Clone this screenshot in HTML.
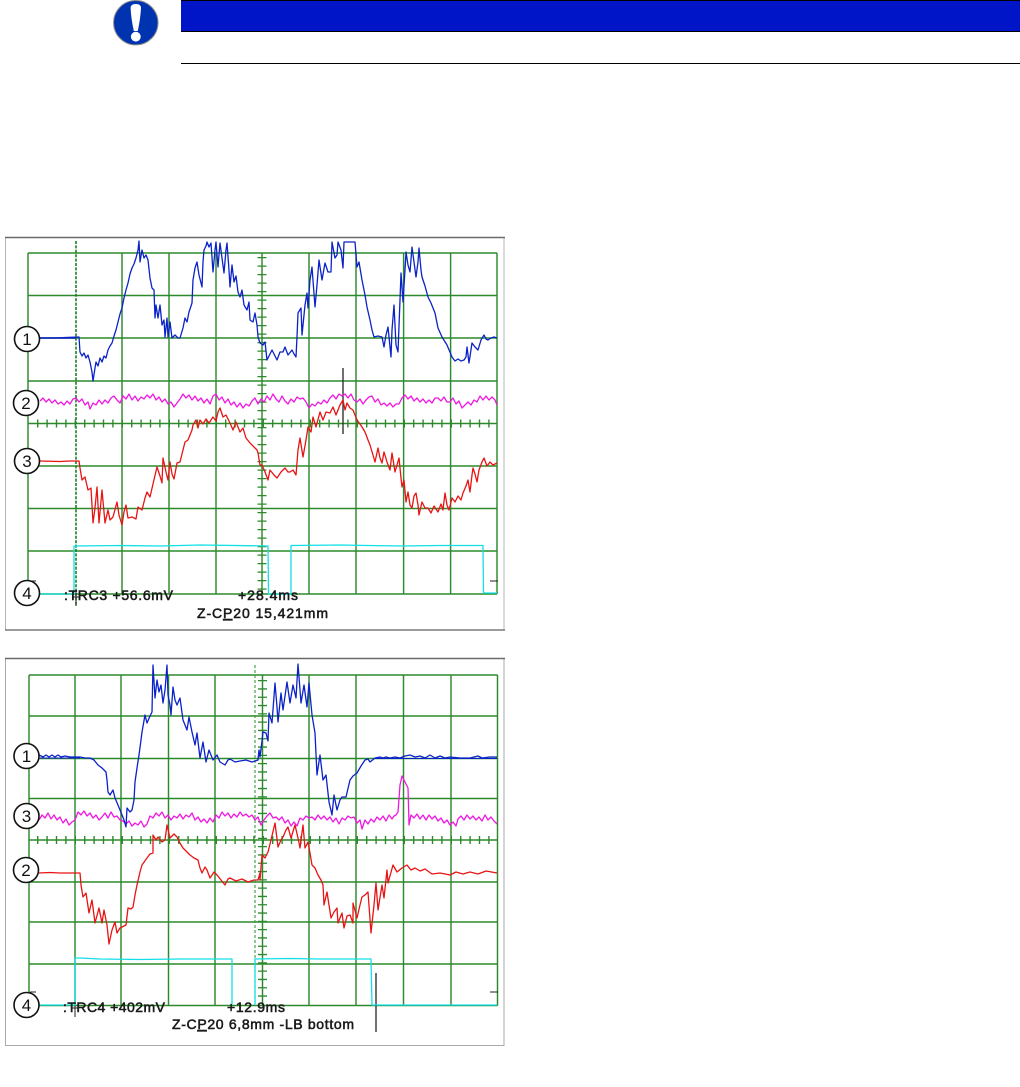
<!DOCTYPE html>
<html><head><meta charset="utf-8"><title>Oscilloscope traces</title>
<style>
html,body{margin:0;padding:0;background:#fff}
svg{display:block}
text{font-family:"Liberation Sans",sans-serif}
.sc{filter:blur(.35px)}
.t{font-size:14px;fill:#1a1a1a;stroke:#1a1a1a;stroke-width:.55}
.n{font-size:17px;fill:#111;text-anchor:middle}
.c{fill:#fff;stroke:#111;stroke-width:1.6}
.g{stroke:#2c8a2c;stroke-width:1.45;fill:none}
.tr{fill:none;stroke-width:1.3;stroke-linejoin:round}
</style></head>
<body>
<svg width="1020" height="1087" viewBox="0 0 1020 1087" xmlns="http://www.w3.org/2000/svg">
<rect width="1020" height="1087" fill="#fff"/>
<!-- header -->
<rect x="181" y="0" width="839" height="32" fill="#000"/>
<rect x="181" y="1" width="839" height="30" fill="#0015c8"/>
<rect x="181" y="63" width="839" height="1" fill="#000"/>
<circle cx="135.8" cy="22.7" r="22.2" fill="#0033b0" stroke="#8a8a8a" stroke-width="1"/>
<path d="M130.6 8Q130.6 4 135.8 4Q141 4 141 8Q140.5 18 137.8 31H133.8Q131 18 130.6 8Z" fill="#fff"/>
<circle cx="135.8" cy="36.7" r="4.9" fill="#fff"/>

<g class="sc">
<!-- plot 1 -->
<rect x="5.5" y="237.5" width="498.5" height="392.5" fill="#fff" stroke="#b5b5b5"/>
<path d="M5 237.5H505" stroke="#6a6a6a" stroke-width="1.6"/>
<path d="M5 630H505" stroke="#7a7a7a" stroke-width="1.4"/>
<path class="g" d="M28 253V594M122 253V594M169 253V594M216 253V594M262 253V594M309 253V594M356 253V594M403.6 253V594M450.6 253V594M497 253V594M28 253H497M28 295.5H497M28 338H497M28 381H497M28 423.5H497M28 466H497M28 508.5H497M28 551H497M28 594H497"/>
<path d="M76 241V605" stroke="#17801f" stroke-width="1.6" stroke-dasharray="3 1.4" fill="none"/>
<path d="M37 423.5H497" stroke="#2c8a2c" stroke-width="8" stroke-dasharray="1.4 8" fill="none"/>
<path d="M262 257V590" stroke="#2c8a2c" stroke-width="9" stroke-dasharray="1.3 7.2" fill="none"/>
<path d="M490 581H498M30 581H36" stroke="#222" stroke-width="1"/>
<path d="M343 368V434" stroke="#333" stroke-width="1.4"/>
<path d="M76 590V606M72 597H80" stroke="#222" stroke-width="1"/>
<polyline class="tr" stroke="#10e0e6" stroke-width="1.6" points="40,594 74,594 74,546 120,545.5 160,546 200,545 268,546 268.5,594 291,594 291,545.5 340,545 400,546 440,545.5 483,545.5 483.5,593 497,593"/>
<polyline class="tr" stroke="#ee18e0" points="40,401 43,398 46,402 49,399 52,403 55,400 58,404 61,402 64,405 67,401 70,404 73,399 76,398 79,402 82,399 85,405 88,402 90,409 93,403 96,405 99,400 102,404 105,400 108,403 111,398 114,396 117,400 120,403 123,396 126,399 129,394 132,400 135,396 138,401 141,397 144,399 147,395 150,398 153,394 156,400 159,397 162,402 165,399 168,404 171,402 174,407 177,403 180,399 183,394 186,398 189,395 192,400 195,396 198,401 201,398 204,403 207,399 210,404 213,396 216,394 219,400 222,397 225,403 228,399 231,405 234,402 237,407 240,403 243,408 246,404 249,406 252,401 255,398 258,404 261,399 264,402 267,396 270,400 273,394 276,399 279,402 282,396 285,401 288,404 291,399 294,402 297,397 300,399 303,398 306,402 309,408 312,404 315,406 318,402 321,404 324,400 327,403 330,398 333,395 336,399 339,394 342,396 345,394 348,398 351,394 354,400 357,402 360,399 363,404 366,400 369,397 372,396 375,402 378,399 381,405 384,403 387,406 390,403 393,407 396,404 399,404 402,398 405,395 408,399 411,396 414,401 417,398 420,402 423,399 426,403 429,400 432,403 435,398 438,398 441,401 444,397 447,402 450,402 453,398 456,404 459,401 462,408 465,405 468,402 471,405 474,400 477,402 480,396 483,400 486,396 489,400 492,397 495,400 497,405"/>
<polyline class="tr" stroke="#e81414" points="40,461 60,461.5 70,461 79,461 80,468 82,480 85,477 88,490 91,488 93,523 95,508 97,487 99,523 102,490 105,523 108,510 110,520 113,517 117,502 119,515 122,525 124,512 126,505 128,518 132,517 136,519 138,507 142,510 145,498 147,492 150,497 153,484 157,467 160,476 162,483 163,458 166,472 168,480 170,462 172,474 174,479 177,463 180,462 183,450 185,442 188,440 190,435 192,430 193,425 196,420 198,428 200,420 203,424 206,419 209,423 213,417 216,421 218,412 220,408 223,417 226,415 230,423 233,430 236,422 240,432 243,428 246,438 250,443 253,446 257,450 258,453 260,465 262,465 265,472 268,480 270,470 274,475 277,478 281,472 285,468 288,472 290,472 293,470 296,475 298,450 300,438 303,457 306,440 308,427 311,432 313,417 316,427 320,412 323,420 326,412 330,413 333,407 336,415 340,405 343,400 345,410 347,403 350,408 353,410 357,420 360,424 362,427 365,432 368,440 370,445 373,455 375,462 378,448 380,458 382,463 384,452 387,462 390,470 392,453 395,472 399,458 401,478 402,487 404,480 406,502 408,492 410,505 412,508 414,496 416,493 418,505 419,515 422,502 425,508 428,508 431,513 434,506 438,512 441,504 443,510 445,493 447,505 449,510 452,498 455,502 458,496 461,500 463,493 466,486 468,480 470,492 472,475 473,468 475,474 477,482 479,470 482,462 484,458 487,466 490,462 493,465 497,463"/>
<polyline class="tr" stroke="#0b22c8" points="40,338 55,338 65,337.5 79,337 80,352 82,356 84,353 86,358 88,355 90,362 92,372 93,381 95,368 96,362 98,366 100,358 102,362 104,356 106,358 108,350 110,346 112,343 114,336 116,330 118,322 120,314 122,308 124,298 126,290 128,283 130,274 132,268 134,264 136,258 138,250 139,241 140,262 142,250 144,258 146,255 148,260 150,278 152,288 154,290 155,318 156,305 158,318 160,305 162,325 164,320 165,337 167,318 168,337 170,322 172,338 175,335 178,338 180,338 183,328 185,318 187,322 189,312 192,303 193,280 195,268 197,262 199,275 202,287 203,262 204,250 206,246 207,242 209,247 211,243 213,272 215,250 216,242 218,267 220,243 222,258 224,273 226,250 227,243 229,270 230,287 232,265 234,282 236,276 238,292 240,297 242,290 244,305 247,310 249,302 250,320 253,322 255,313 257,325 258,337 260,343 263,345 265,342 267,360 270,354 272,350 275,356 277,360 280,352 283,352 285,347 288,355 292,350 294,354 296,357 297,337 298,313 301,308 302,335 305,305 307,293 308,308 310,280 312,267 315,307 317,285 319,260 322,280 325,263 328,272 331,272 332,242 335,258 337,255 338,242 341,250 343,268 344,242 350,242 355,242 357,267 359,262 362,280 365,295 367,307 370,320 372,330 374,337 378,336 382,337 384,347 386,335 388,327 391,357 392,330 394,305 396,345 398,352 400,300 401,273 403,302 405,270 406,252 408,265 410,272 412,247 414,262 416,277 418,262 419,248 421,270 422,277 425,286 428,297 431,303 435,313 438,328 442,337 447,345 452,357 455,361 458,359 461,361 464,360 466,357 467,347 469,363 472,343 475,347 478,350 481,340 484,335 486,339 488,340 491,338 494,337 497,338"/>
<path d="M40 338H76" stroke="#0b22c8" stroke-width="1.4"/>
<text class="t" x="64" y="600" textLength="109" lengthAdjust="spacing">:TRC3 +56.6mV</text>
<text class="t" x="238" y="600" textLength="60" lengthAdjust="spacing">+28.4ms</text>
<text class="t" x="197" y="618" textLength="131" lengthAdjust="spacing">Z-C<tspan text-decoration="underline">P</tspan>20 15,421mm</text>
<circle class="c" cx="27" cy="339" r="12.5"/><text class="n" x="27" y="345">1</text>
<circle class="c" cx="26" cy="403" r="12.5"/><text class="n" x="26" y="409">2</text>
<circle class="c" cx="27" cy="461" r="12.5"/><text class="n" x="27" y="467">3</text>
<circle class="c" cx="27" cy="593" r="12.5"/><text class="n" x="27" y="599">4</text>

<!-- plot 2 -->
<rect x="5.5" y="658.5" width="498.5" height="387" fill="#fff" stroke="#aaa"/>
<path d="M5 658.5H505" stroke="#6a6a6a" stroke-width="1.4"/>
<path class="g" d="M29 675V1005.5M75 675V1005.5M121 675V1005.5M168.5 675V1005.5M215 675V1005.5M262.5 675V1005.5M309 675V1005.5M356 675V1005.5M403.5 675V1005.5M451 675V1005.5M497.5 675V1005.5M29 675H497.5M29 716H497.5M29 758.5H497.5M29 798.5H497.5M29 840H497.5M29 882H497.5M29 922H497.5M29 964H497.5M29 1005.5H497.5"/>
<path d="M255 665V1005" stroke="#3a9a3a" stroke-width="1.1" stroke-dasharray="3 2" fill="none"/>
<path d="M37 840H497" stroke="#2c8a2c" stroke-width="8" stroke-dasharray="1.4 8" fill="none"/>
<path d="M262.5 680V1000" stroke="#2c8a2c" stroke-width="9" stroke-dasharray="1.3 7" fill="none"/>
<path d="M490 992H498M30 992H36" stroke="#222" stroke-width="1"/>
<path d="M376 973V1032" stroke="#111" stroke-width="1.2"/>
<path d="M75 1000V1017M71 1008H79" stroke="#222" stroke-width="1"/>
<polyline class="tr" stroke="#10e0e6" stroke-width="1.6" points="39,1005 75,1005 75,958 80,958 100,959 140,959.5 180,959 232,959 232,1005"/>
<polyline class="tr" stroke="#10e0e6" stroke-width="1.6" points="255,1005 255,959 290,958.5 320,959 371,959 372,1005 497,1005"/>
<polyline class="tr" stroke="#ee18e0" points="39,820 42,815 45,818 48,813 51,819 54,815 57,820 60,817 63,823 66,819 69,825 72,822 75,820 78,812 81,815 84,811 87,816 90,813 93,818 96,815 99,820 102,817 105,813 108,818 111,812 114,817 117,816 120,820 123,821 126,824 129,821 132,826 135,823 138,825 141,821 144,827 147,824 150,816 153,818 156,813 159,816 162,812 165,818 168,815 171,820 174,816 177,818 180,814 183,819 186,815 189,817 192,813 195,820 198,817 201,822 204,819 207,823 210,818 213,822 216,815 219,818 222,812 225,816 228,813 231,818 234,814 237,817 240,812 243,816 246,814 249,817 252,815 255,820 258,817 261,825 264,820 267,816 270,813 273,818 276,817 279,820 282,817 285,823 288,820 291,826 294,822 297,826 300,818 303,820 306,816 309,818 312,817 315,820 318,815 321,819 324,816 327,820 330,817 333,822 336,818 339,824 342,818 345,820 348,816 351,818 354,817 357,823 360,820 362,829 365,820 368,824 371,819 374,822 377,817 380,820 383,816 386,821 389,815 392,819 394,816 396,815 398,812 400,785 402,776 405,782 408,788 408.5,805 409,825 411,815 414,818 417,814 420,819 423,815 426,820 429,815 432,819 435,816 438,821 441,818 444,823 447,820 450,825 453,822 456,826 458,819 461,816 464,820 467,815 470,819 473,816 476,820 479,817 482,821 485,815 488,820 491,817 494,821 497,824"/>
<polyline class="tr" stroke="#e81414" points="39,873 50,872.5 60,873 70,873 80,873 81,885 83,897 86,893 89,913 92,900 95,923 99,908 102,923 104,910 107,925 109,944 112,930 115,922 117,933 120,928 122,927 126,925 128,908 131,909 133,907 135,895 137,885 140,872 142,865 147,858 150,854 153,853 153,835 156,840 158,837 162,842 165,840 167,825 170,838 174,834 177,837 180,843 183,848 187,852 190,855 194,858 198,860 200,868 202,873 205,867 207,870 210,878 214,872 217,875 221,880 225,885 228,879 230,878 236,881 242,879 248,882 254,880 258,880 260,873 260,880 262,855 265,858 268,852 271,840 275,823 278,847 281,840 283,837 286,830 288,827 291,838 295,825 298,838 300,848 303,825 305,848 308,842 310,853 312,865 315,868 318,875 321,880 323,885 324,905 327,892 329,905 331,918 334,912 337,908 338,923 342,913 344,928 347,916 350,915 353,923 353,903 357,918 360,905 362,897 365,895 368,892 371,933 374,905 376,883 378,910 382,885 384,898 387,870 388,883 393,865 397,872 402,868 407,865 411,870 415,868 420,871 425,869 432,874 440,873 450,875 456,872 463,874 470,872 478,874 486,871 497,873"/>
<polyline class="tr" stroke="#0b22c8" points="39,755 43,757 46,755 49,757 52,755 55,757 58,755 61,757 65,756 70,757 75,757 80,757 85,758 90,758 94,760 98,765 102,768 106,772 107,780 108,792 110,795 113,790 115,798 118,805 122,815 124,820 126,827 127,808 130,812 132,810 134,800 135,782 137,768 139,755 141,740 142,732 145,715 147,723 150,716 152,712 153,665 155,698 157,680 159,692 161,685 163,703 165,690 167,665 168,695 170,705 171,715 173,687 175,700 177,705 180,698 183,720 187,730 189,717 192,732 195,745 197,733 200,758 203,742 206,762 209,750 213,760 217,755 220,762 225,765 228,760 230,759 235,762 240,761 246,760 252,762 258,760 259,750 260,757 262,741 263,732 266,733 268,741 269,713 272,723 275,683 277,707 278,722 281,693 283,710 287,682 290,703 293,685 296,698 298,664 301,703 304,685 307,707 309,683 312,715 315,733 317,775 320,755 323,780 326,775 329,802 332,815 334,795 337,810 340,800 342,797 346,797 350,780 353,776 357,773 361,766 365,760 368,759 370,762 375,758 380,757 383,758 386,757 390,758 395,757 400,758 405,756 410,755 415,757 420,756 425,758 430,755 435,758 440,756 445,758 450,757 460,758 470,758 478,756 482,758 490,757 497,757"/>
<path d="M40 758H80M375 758.5H497" stroke="#0b22c8" stroke-width="1"/>
<text class="t" x="63" y="1012" textLength="102" lengthAdjust="spacing">:TRC4 +402mV</text>
<text class="t" x="227" y="1012" textLength="58" lengthAdjust="spacing">+12.9ms</text>
<text class="t" x="172" y="1029" textLength="182" lengthAdjust="spacing">Z-C<tspan text-decoration="underline">P</tspan>20 6,8mm -LB bottom</text>
<circle class="c" cx="26.5" cy="756" r="12.5"/><text class="n" x="26.5" y="762">1</text>
<circle class="c" cx="26.5" cy="816" r="12.5"/><text class="n" x="26.5" y="822">3</text>
<circle class="c" cx="26" cy="870" r="12.5"/><text class="n" x="26" y="876">2</text>
<circle class="c" cx="26.5" cy="1005" r="12.5"/><text class="n" x="26.5" y="1011">4</text>
</g>
</svg>
</body></html>
